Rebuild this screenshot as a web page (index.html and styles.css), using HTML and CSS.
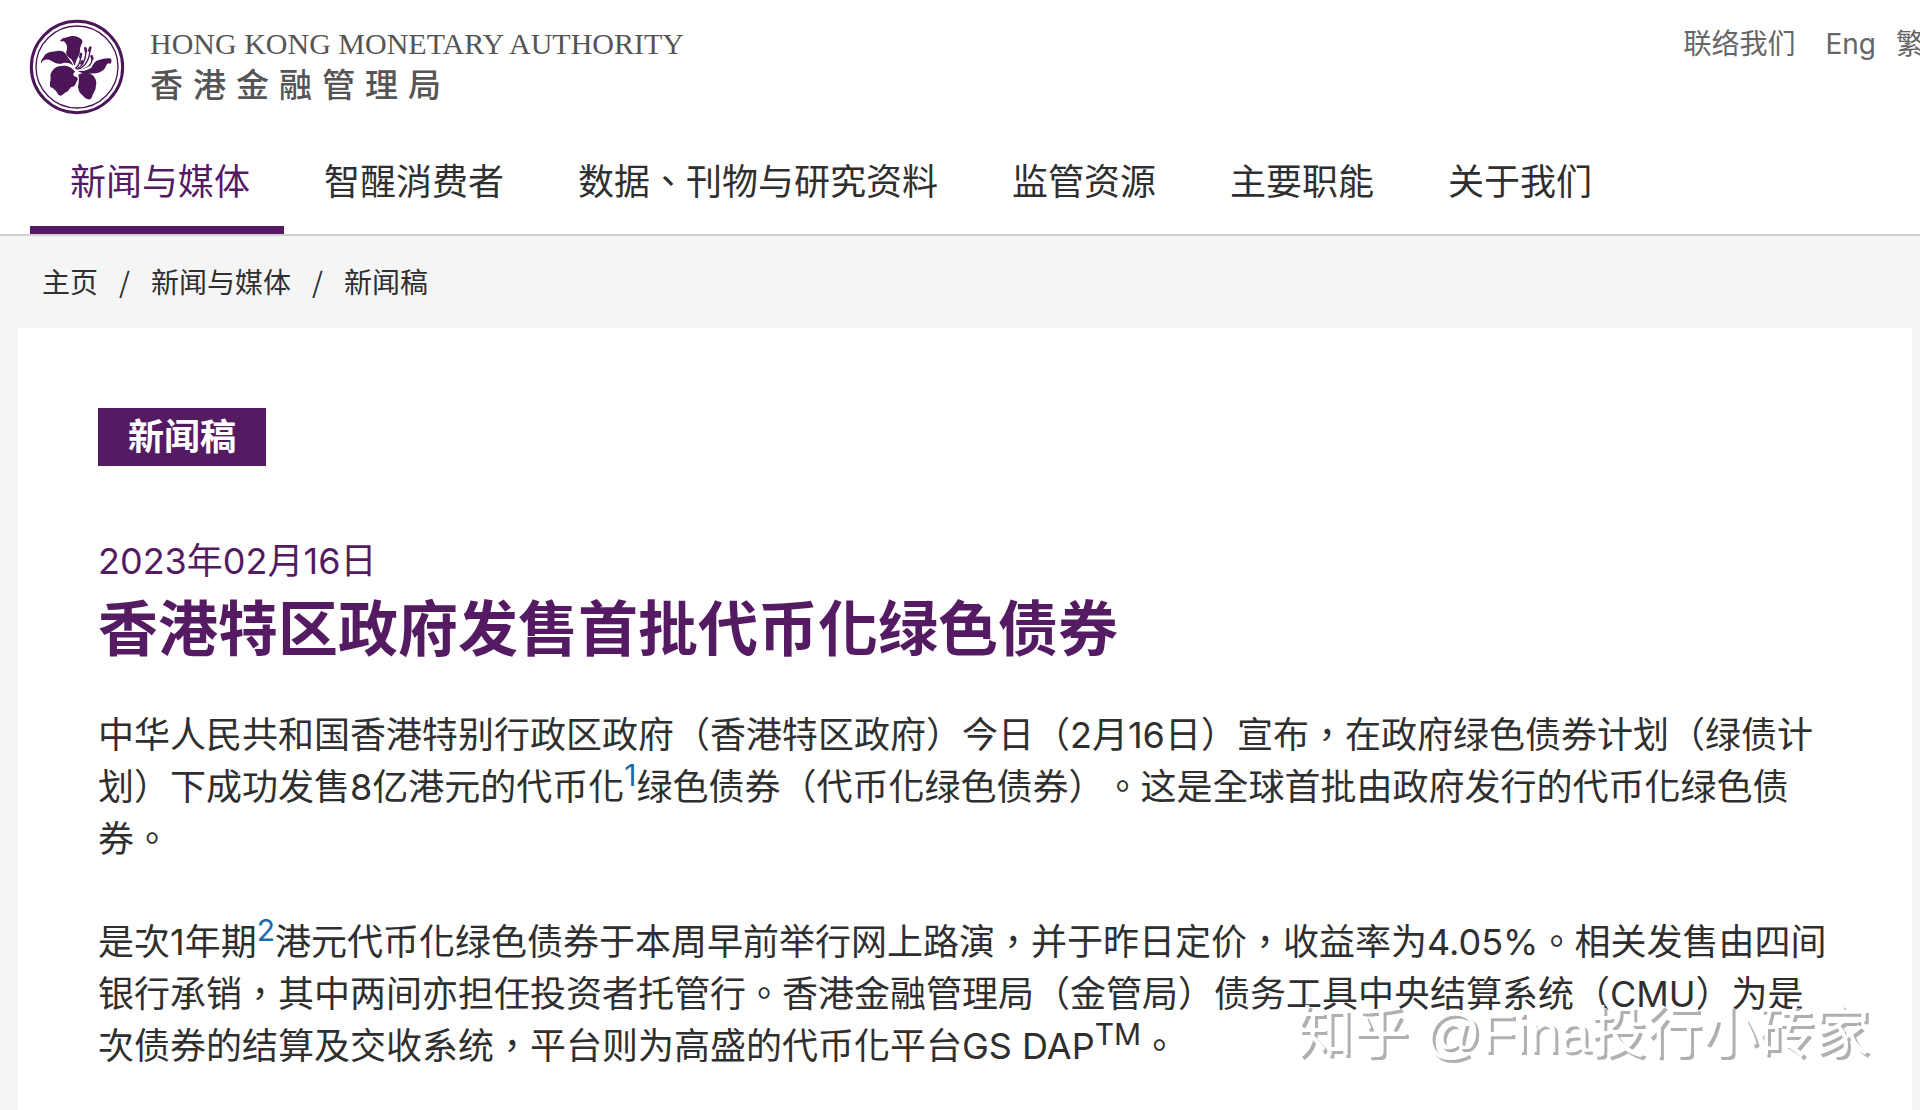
FILE: index.html
```
<!DOCTYPE html>
<html lang="zh-Hant">
<head>
    <meta charset="UTF-8">
    <title>香港特区政府发售首批代币化绿色债券</title>
    <link rel="stylesheet" href="styles.css">
</head>
<body>
  <header id="header">
      <div class="top">
          <a href="#" class="logo">
              <svg class="emblem" viewBox="0 0 288 288" aria-hidden="true">
                  <circle cx="144" cy="144" r="137" fill="none" stroke="#4b1557" stroke-width="9"/>
                  <circle cx="144" cy="144" r="123" fill="none" stroke="#4b1557" stroke-width="4"/>
                  <!-- petals -->
                  <g fill="#4b1557">
                      <path d="M93 66 C101 54 114 57 124 52 C136 48 152 54 160 64 C162 74 152 82 153 95 C153 110 140 120 138 140 C134 138 133 128 127 121 C118 114 110 108 112 98 C117 86 114 76 107 69 C103 65 98 69 93 66Z"/>
                      <path d="M36 134 C34 124 42 117 46 110 C55 98 72 98 84 96 C96 94 108 99 113 108 C118 120 129 126 133 141 C122 131 112 131 103 132 C88 138 78 132 68 126 C55 118 41 121 36 134Z"/>
                      <path d="M136 156 C126 141 106 138 90 142 C76 144 66 158 64 170 C67 182 60 194 64 204 C76 208 82 216 87 226 C95 236 100 226 108 221 C118 218 120 210 127 204 C138 204 140 194 144 186 C150 178 144 174 136 172 C130 166 134 160 139 159Z"/>
                      <path d="M148 167 C158 161 176 159 190 168 C202 178 204 192 200 204 C201 214 192 222 189 234 C184 246 176 240 168 237 C160 226 150 224 149 211 C144 204 150 196 149 187 C151 178 149 174 148 167Z"/>
                      <path d="M143 154 C158 160 176 153 187 146 C192 136 198 124 212 122 C222 121 230 116 246 119 C249 124 247 131 244 135 C238 129 233 136 230 143 C225 155 212 161 200 163 C185 164 168 167 154 160Z"/>
                  </g>
                  <!-- stamens -->
                  <g fill="none" stroke="#4b1557" stroke-width="4" stroke-linecap="round">
                      <path d="M140 148 C151 138 156 128 155 107"/>
                      <path d="M142 151 C163 140 172 120 170 92"/>
                      <path d="M144 153 C172 142 182 122 183 90"/>
                      <path d="M148 155 C177 148 190 138 190 113"/>
                  </g>
                  <g fill="none" stroke="#4b1557" stroke-width="8" stroke-linecap="round">
                      <path d="M156 105 L154 114"/>
                      <path d="M169 88 L171 96"/>
                      <path d="M184 86 L181 95"/>
                      <path d="M188 112 L190 119"/>
                      <path d="M160 127 L157 133"/>
                  </g>
                  <path d="M138 151 C150 158 168 151 184 142" fill="none" stroke="#fff" stroke-width="4"/>
              </svg>
              <span class="logo-text">
                  <span class="logo-en">HONG KONG MONETARY AUTHORITY</span>
                  <span class="logo-zh">香港金融管理局</span>
              </span>
          </a>
          <div class="tools">
              <a href="#" class="contact">联络我们</a>
              <a href="#">Eng</a>
              <a href="#">繁</a>
          </div>
      </div>
      <nav>
          <ul id="nav">
              <li class="selected"><a href="#">新闻与媒体</a></li>
              <li><a href="#">智醒消费者</a></li>
              <li><a href="#">数据、刊物与研究资料</a></li>
              <li><a href="#">监管资源</a></li>
              <li><a href="#">主要职能</a></li>
              <li><a href="#">关于我们</a></li>
          </ul>
      </nav>
  </header>
  <ul id="crumbs">
      <li><a href="#">主页</a></li>
      <li>/</li>
      <li><a href="#">新闻与媒体</a></li>
      <li>/</li>
      <li><a href="#">新闻稿</a></li>
  </ul>
  <main id="content">
      <span class="tag">新闻稿</span>
      <div class="date">2023年02月16日</div>
      <h1>香港特区政府发售首批代币化绿色债券</h1>
      <p>中华人民共和国香港特别行政区政府（香港特区政府）今日（2月16日）宣布，在政府绿色债券计划（绿债计划）下成功发售8亿港元的代币化<sup><a href="#">1</a></sup>绿色债券（代币化绿色债券）。这是全球首批由政府发行的代币化绿色债券。</p>
      <p>是次1年期<sup><a href="#">2</a></sup>港元代币化绿色债券于本周早前举行网上路演，并于昨日定价，收益率为4.05%。相关发售由四间银行承销，其中两间亦担任投资者托管行。香港金融管理局（金管局）债务工具中央结算系统（CMU）为是次债券的结算及交收系统，平台则为高盛的代币化平台GS DAP<sup>TM</sup>。</p>
  </main>
  <div class="watermark">知乎 @Fina投行小砖家</div>
</body>
</html>
```
FILE: styles.css
```
*{
    margin: 0;
    padding: 0;
    box-sizing: border-box;
}
body{
    position: relative;
    min-height: 100vh;
    display: flex;
    flex-direction: column;
    overflow: hidden;
    background: #f5f5f5;
    color: #2f2f2f;
    font-family: Inter, "Noto Sans CJK TC", sans-serif;
    text-spacing-trim: space-all;
}
ul{
    list-style: none;
}
a{
    color: inherit;
    text-decoration: none;
}
#header{
    background: #fff;
    border-bottom: 2px solid #d2d2d2;
    overflow: hidden;
}
.top{
    display: flex;
    justify-content: space-between;
    align-items: flex-start;
    padding: 19px 0 0 29px;
}
.logo{
    display: flex;
    gap: 25px;
    color: #555;
}
.emblem{
    width: 96px;
    height: 96px;
}
.logo-text{
    display: flex;
    flex-direction: column;
    padding-top: 5px;
}
.logo-en{
    font-family: "Liberation Serif", serif;
    font-size: 30px;
    line-height: 40px;
}
.logo-zh{
    font-size: 33px;
    font-weight: 500;
    line-height: 42px;
    letter-spacing: 10px;
}
.tools{
    display: flex;
    gap: 20px;
    margin-right: -4px;
    padding-top: 5px;
    color: #666;
    font-size: 28px;
    line-height: 40px;
    white-space: nowrap;
}
.contact{
    margin-right: 10px;
}
#nav{
    display: flex;
    padding: 21px 0 0 30px;
}
#nav li{
    padding: 20px 34px 18px 40px;
    border-bottom: 8px solid transparent;
    font-size: 36px;
    line-height: 52px;
    white-space: nowrap;
}
#nav .selected{
    color: #541b63;
    border-color: #541b63;
}
#crumbs{
    display: flex;
    gap: 21px;
    padding: 25px 42px 27px;
    font-family: "Noto Sans CJK TC", sans-serif;
    font-size: 28px;
    line-height: 40px;
}
#content{
    flex: 1;
    margin: 0 8px 0 18px;
    padding: 80px;
    background: #fff;
}
.tag{
    display: inline-block;
    padding: 0 30px;
    background: #541b63;
    color: #fff;
    font-size: 36px;
    font-weight: bold;
    line-height: 58px;
    vertical-align: top;
}
.date{
    margin-top: 69px;
    color: #541b63;
    font-size: 36px;
    line-height: 52px;
}
h1{
    color: #541b63;
    font-size: 60px;
    line-height: 84px;
}
#content p{
    margin-top: 51px;
    font-size: 36px;
    line-height: 52px;
}
#content h1 + p{
    margin-top: 38px;
}
sup{
    font-size: 30px;
    line-height: 0;
    vertical-align: 14px;
}
sup a{
    color: #1a6ca8;
}
/* sits over the end of the article */
.watermark{
    position: absolute;
    right: 50px;
    bottom: 79px;
    color: #fff;
    font-family: "Liberation Sans", "Noto Sans CJK TC", sans-serif;
    font-size: 56px;
    line-height: 80px;
    text-shadow: 3px 3px 0 #b0b0b0;
}
```
